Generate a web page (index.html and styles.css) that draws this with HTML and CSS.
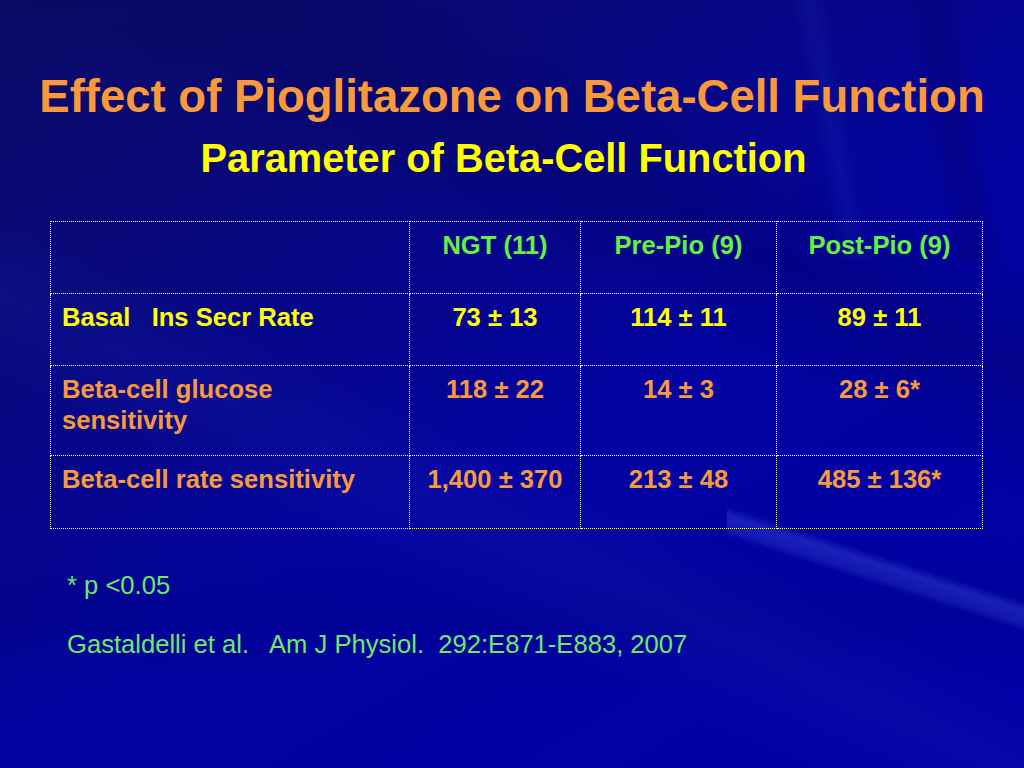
FILE: index.html
```html
<!DOCTYPE html>
<html lang="en">
<head>
<meta charset="utf-8">
<title>Effect of Pioglitazone on Beta-Cell Function</title>
<link rel="stylesheet" href="styles.css">
</head>
<body>
<div class="slide">
  <h1 class="title">Effect of Pioglitazone on Beta-Cell Function</h1>
  <h2 class="subtitle">Parameter of Beta-Cell Function</h2>
  <table class="data">
    <colgroup>
      <col class="c-label">
      <col class="c-ngt">
      <col class="c-pre">
      <col class="c-post">
    </colgroup>
    <tr class="row-head">
      <td></td>
      <td class="num">NGT (11)</td>
      <td class="num">Pre-Pio (9)</td>
      <td class="num">Post-Pio (9)</td>
    </tr>
    <tr class="row-basal">
      <td class="label">Basal&nbsp;&nbsp; Ins Secr Rate</td>
      <td class="num">73 ± 13</td>
      <td class="num">114 ± 11</td>
      <td class="num">89 ± 11</td>
    </tr>
    <tr class="row-glucose">
      <td class="label">Beta-cell glucose sensitivity</td>
      <td class="num">118 ± 22</td>
      <td class="num">14 ± 3</td>
      <td class="num">28 ± 6*</td>
    </tr>
    <tr class="row-rate">
      <td class="label">Beta-cell rate sensitivity</td>
      <td class="num">1,400 ± 370</td>
      <td class="num">213 ± 48</td>
      <td class="num">485 ± 136*</td>
    </tr>
  </table>
  <p class="note">* p &lt;0.05</p>
  <p class="cite">Gastaldelli et al.&nbsp;&nbsp; Am J Physiol.&nbsp; 292:E871-E883, 2007</p>
</div>
</body>
</html>
```

FILE: styles.css
```css
html, body {
  margin: 0;
  padding: 0;
}

body {
  width: 1024px;
  height: 768px;
  overflow: hidden;
  font-family: "Liberation Sans", Arial, sans-serif;
  background-color: #0000a2;
  background-image:
    linear-gradient(197.7deg, transparent 43%, rgba(70, 90, 225, 0.35) 47%, rgba(70, 90, 225, 0.25) 53%, transparent 56%),
    linear-gradient(79.7deg, transparent 25%, rgba(40, 60, 200, 0.16) 31%, transparent 37%, transparent 60%, rgba(0, 0, 60, 0.2) 70%, transparent 80%),
    linear-gradient(205deg, transparent 20%, rgba(0, 0, 70, 0.25) 30%, transparent 40%, transparent 55%, rgba(30, 40, 170, 0.2) 62%, transparent 70%),
    linear-gradient(180deg, transparent 70%, rgba(0, 0, 120, 0.25) 80%, transparent 90%),
    linear-gradient(150deg, #0b0b66 0%, #08087c 25%, #0303a0 55%, #0000a8 100%);
  background-size: 297px 140px, 264px 260px, 1024px 768px, 1024px 768px, 100% 100%;
  background-position: right 0 top 500px, right 0 top 0, 0 0, 0 0, 0 0;
  background-repeat: no-repeat;
}

.slide {
  display: flex;
  flex-direction: column;
  padding-top: 71px;
}

.title {
  margin: 0;
  font-size: 45.5px;
  line-height: 52px;
  font-weight: bold;
  color: #f89a3c;
  text-align: center;
}

.subtitle {
  margin: 12px 0 0;
  padding-right: 17px;
  font-size: 39.8px;
  line-height: 46px;
  font-weight: bold;
  color: #ffff00;
  text-align: center;
}

.data {
  margin: 40px 0 0 50px;
  width: 933px;
  table-layout: fixed;
  border-collapse: collapse;
  font-size: 25.6px;
  line-height: 31px;
  font-weight: bold;
}

.c-label { width: 359px; }
.c-ngt { width: 171px; }
.c-pre { width: 196px; }
.c-post { width: 206px; }

.data td {
  border: 1px dotted #ffffff;
  padding: 8px 10px 0 11px;
  vertical-align: top;
}

.data td.num {
  text-align: center;
  padding-left: 2px;
  padding-right: 2px;
}

.row-head { height: 72px; color: #66f040; }
.row-basal { height: 72px; color: #ffff00; }
.row-glucose { height: 90px; color: #f89a3c; }
.row-rate { height: 73px; color: #f89a3c; }

.note,
.cite {
  margin: 0;
  padding-left: 67px;
  font-size: 25.6px;
  line-height: 30px;
  color: #6ee86a;
}

.note {
  margin-top: 41px;
}

.cite {
  margin-top: 29px;
}
```
